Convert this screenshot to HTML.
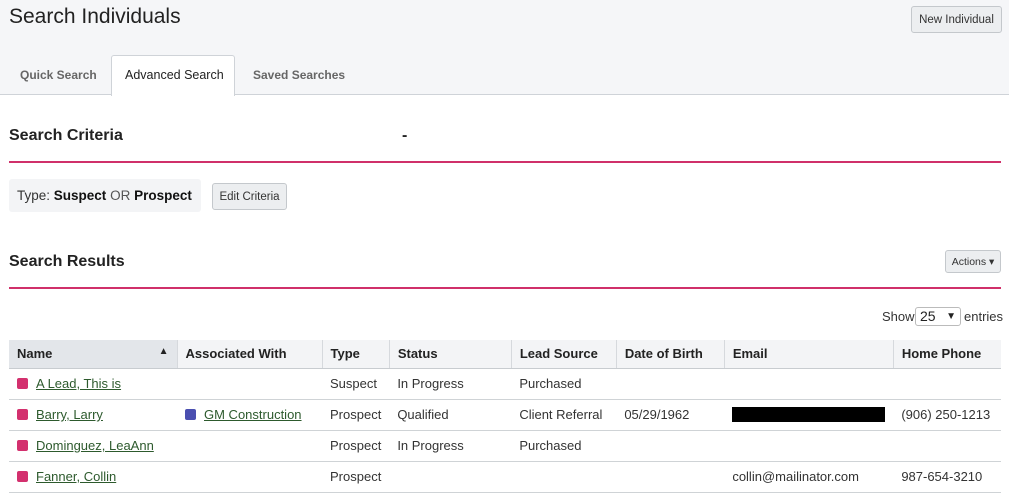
<!DOCTYPE html>
<html><head><style>
*{box-sizing:border-box;margin:0;padding:0}
body{width:1009px;height:474px;overflow:hidden;background:#fff;font-family:"Liberation Sans",sans-serif;color:#222;position:relative;font-size:13px}
.a{position:absolute;white-space:nowrap}
.hdr{position:absolute;left:0;top:0;width:1009px;height:95px;background:#f5f6f8;border-bottom:1px solid #cfd3d8}
.btn{position:absolute;background:#eceef0;border:1px solid #c4c8cc;border-radius:3px;font-size:11.5px;color:#333;display:flex;align-items:center;justify-content:center;white-space:nowrap}
.line{position:absolute;left:9px;width:992px;height:2px;background:#d0306a}
table{position:absolute;left:9px;top:340px;width:992px;border-collapse:collapse}
th{background:#f3f4f6;text-align:left;font-weight:bold;height:28px;padding:0 8px;border-left:1px solid #d6d9dd;border-bottom:1px solid #c8ccd0;font-size:13px}
th:first-child{border-left:none;background:#e3e6ea}
td{height:31px;padding:0 8px;border-bottom:1px solid #cfd3d6;font-size:13px;color:#333}
a{color:#2d5a2d;text-decoration:underline}
.sq{display:inline-block;width:11px;height:11px;border-radius:2px;background:#d3306e;margin-right:8px;vertical-align:-1px}
</style></head><body>
<div class="hdr"></div>
<div class="a" style="left:9px;top:5px;font-size:21px;color:#222">Search Individuals</div>
<div class="btn" style="left:911px;top:6px;width:91px;height:27px">New Individual</div>
<div class="a" style="left:20px;top:68px;color:#666;font-size:12px;font-weight:bold">Quick Search</div>
<div class="a" style="left:111px;top:55px;width:124px;height:41px;background:#fff;border:1px solid #cfd3d8;border-bottom:none;border-radius:3px 3px 0 0"></div>
<div class="a" style="left:125px;top:68px;color:#222;font-size:12.5px">Advanced Search</div>
<div class="a" style="left:253px;top:68px;color:#666;font-size:12px;font-weight:bold">Saved Searches</div>
<div class="a" style="left:9px;top:127px;font-size:16px;font-weight:bold">Search Criteria</div>
<div class="a" style="left:402px;top:127px;font-size:16px;font-weight:bold">-</div>
<div class="line" style="top:161px"></div>
<div class="a" style="left:9px;top:179px;width:192px;height:33px;background:#f3f4f6;border-radius:3px"></div>
<div class="a" style="left:17px;top:188px;font-size:13.5px;color:#333">Type: <b style="color:#111">Suspect</b> <span style="color:#555">OR</span> <b style="color:#111">Prospect</b></div>
<div class="btn" style="left:212px;top:183px;width:75px;height:27px">Edit Criteria</div>
<div class="a" style="left:9px;top:253px;font-size:16px;font-weight:bold">Search Results</div>
<div class="btn" style="left:945px;top:250px;width:56px;height:23px;font-size:10.5px">Actions ▾</div>
<div class="line" style="top:287px"></div>
<div class="a" style="left:882px;top:309px;color:#333">Show</div>
<div class="a" style="left:915px;top:307px;width:46px;height:19px;border:1px solid #bbb;border-radius:3px;font-size:14px;padding-left:4px;line-height:17px">25<span style="position:absolute;right:4px;font-size:10px">▼</span></div>
<div class="a" style="left:964px;top:309px;color:#333">entries</div>
<table>
<tr><th style="width:168px">Name<span style="float:right;font-size:10px">▲</span></th><th style="width:145px">Associated With</th><th style="width:67px">Type</th><th style="width:122px">Status</th><th style="width:105px">Lead Source</th><th style="width:108px">Date of Birth</th><th style="width:168px">Email</th><th>Home Phone</th></tr>
<tr><td><span class="sq"></span><a>A Lead, This is</a></td><td></td><td>Suspect</td><td>In Progress</td><td>Purchased</td><td></td><td></td><td></td></tr>
<tr><td><span class="sq"></span><a>Barry, Larry</a></td><td><span class="sq" style="background:#4a4fb0"></span><a>GM Construction</a></td><td>Prospect</td><td>Qualified</td><td>Client Referral</td><td>05/29/1962</td><td><div style="width:153px;height:15px;background:#000"></div></td><td>(906) 250-1213</td></tr>
<tr><td><span class="sq"></span><a>Dominguez, LeaAnn</a></td><td></td><td>Prospect</td><td>In Progress</td><td>Purchased</td><td></td><td></td><td></td></tr>
<tr><td><span class="sq"></span><a>Fanner, Collin</a></td><td></td><td>Prospect</td><td></td><td></td><td></td><td>collin@mailinator.com</td><td>987-654-3210</td></tr>
</table>
</body></html>
